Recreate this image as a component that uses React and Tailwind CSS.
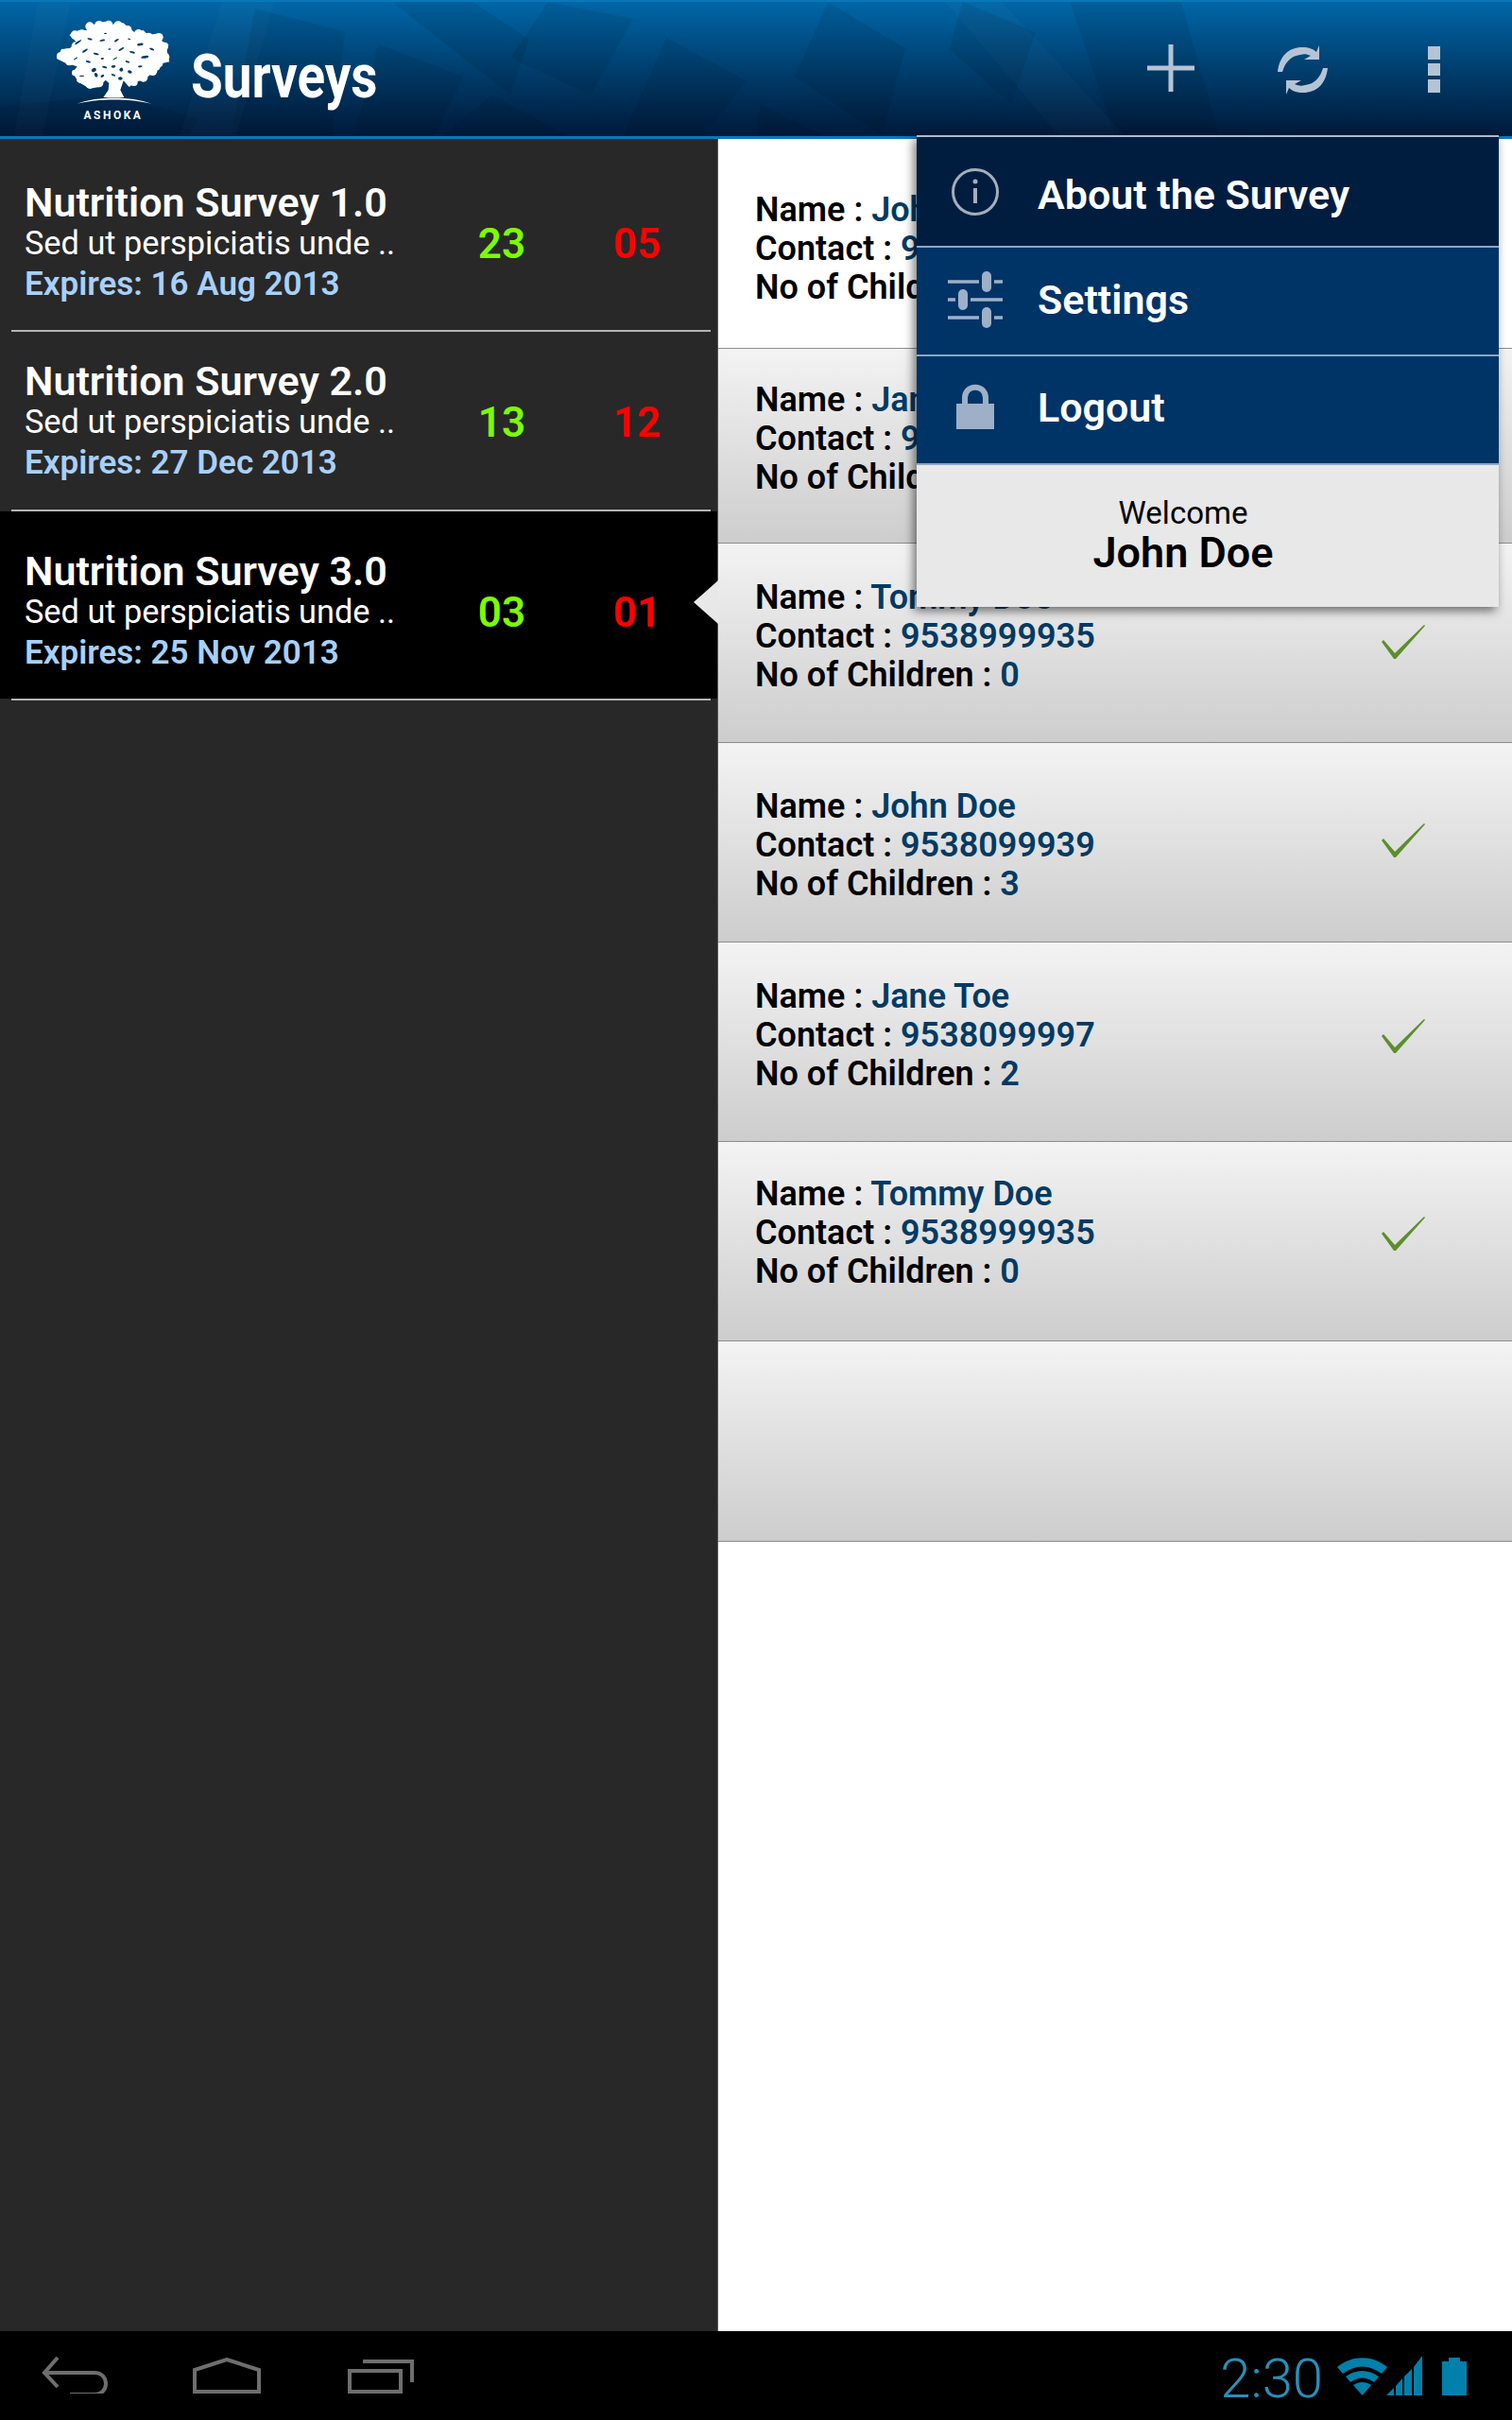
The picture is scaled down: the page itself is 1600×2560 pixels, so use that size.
import React from 'react';

const surveys = [
  { title: 'Nutrition Survey 1.0', expires: 'Expires: 16 Aug 2013', done: '23', left: '05', box: 'h-[202px] pt-[46px]' },
  { title: 'Nutrition Survey 2.0', expires: 'Expires: 27 Dec 2013', done: '13', left: '12', box: 'h-[188px] pt-[31px]' },
  { title: 'Nutrition Survey 3.0', expires: 'Expires: 25 Nov 2013', done: '03', left: '01', box: 'h-[198px] pt-[42px] bg-black' },
];

const people = [
  { name: 'John Doe', contact: '9538099939', kids: '3', box: 'h-[222px] pt-[55px] bg-white', check: 'mt-[29px]' },
  { name: 'Jane Toe', contact: '9538099997', kids: '2', box: 'h-[206px] pt-[34px] bg-gradient-to-b from-[#f3f3f3] to-[#cdcdcd]', check: 'mt-[40px]' },
  { name: 'Tommy Doe', contact: '9538999935', kids: '0', box: 'h-[211px] pt-[37px] bg-gradient-to-b from-[#f3f3f3] to-[#cdcdcd]', check: 'mt-[49px]' },
  { name: 'John Doe', contact: '9538099939', kids: '3', box: 'h-[211px] pt-[47px] bg-gradient-to-b from-[#f3f3f3] to-[#cdcdcd]', check: 'mt-[38px]' },
  { name: 'Jane Toe', contact: '9538099997', kids: '2', box: 'h-[211px] pt-[37px] bg-gradient-to-b from-[#f3f3f3] to-[#cdcdcd]', check: 'mt-[44px]' },
  { name: 'Tommy Doe', contact: '9538999935', kids: '0', box: 'h-[211px] pt-[35px] bg-gradient-to-b from-[#f3f3f3] to-[#cdcdcd]', check: 'mt-[44px]' },
];

const Tree = () => {
  const lumps = [[165,78,14],[195,74,14],[225,72,13],[255,76,15],[285,88,13],[320,100,13],[352,112,14],[385,112,13],[402,140,12],[405,175,13],[385,195,12],[365,220,14],[335,240,14],[305,255,12],[195,258,13],[165,262,13],[135,245,12],[118,225,10],[100,190,12],[72,172,12],[95,160,12],[120,140,13],[118,105,14],[140,100,12]];
  const holes = [[128,128,12,3],[165,118,8,3],[205,122,9,3],[250,122,8,3],[290,118,5,2],[325,135,10,4],[150,155,10,3],[185,165,9,3],[228,150,5,2],[265,150,10,3],[300,160,9,3],[340,175,12,4],[120,180,7,2],[160,190,8,3],[205,180,5,3],[245,180,8,2],[285,190,7,3],[325,205,7,3],[178,216,8,6],[212,207,8,3],[240,205,7,4],[265,215,6,6],[292,222,7,5],[140,235,8,2],[205,235,6,4],[240,232,7,3],[262,243,7,5],[185,232,5,7],[362,150,8,3],[215,100,5,2]];
  return (
    <svg className="w-[160px] h-[140px] shrink-0" viewBox="0 0 480 420">
      <path fill="#fff" d="M165 75 190 68 215 62 240 72 270 66 290 82 305 95 335 90 350 105 385 100 395 125 415 135 410 155 418 190 395 195 385 215 365 225 340 245 310 255 290 270 272 250 262 280 274 303 208 303 224 280 226 258 215 248 195 270 165 275 130 255 110 225 125 205 90 195 60 180 75 150 100 148 125 130 100 105 130 90 170 90Z" />
      {lumps.map(([x, y, r], i) => <circle key={i} cx={x} cy={y} r={r} fill="#fff" />)}
      {holes.map(([x, y, rx, ry], i) => (
        <ellipse key={i} cx={x} cy={y} rx={rx} ry={ry} fill="#03386f" transform={`rotate(${(i * 47) % 70 - 35} ${x} ${y})`} />
      ))}
      <path fill="#fff" d="M125 323C190 298 295 298 360 323 295 306 190 306 125 323Z" />
    </svg>
  );
};

const HeaderPattern = () => (
  <svg className="absolute inset-0 w-full h-full" viewBox="0 0 1600 144" preserveAspectRatio="none">
    <g fill="#000" fillOpacity="0.08">
      <polygon points="270,7 365,32 352,143 245,143" />
      <polygon points="400,45 490,80 460,143 375,143" />
      <polygon points="415,0 500,0 560,40 540,100" />
      <polygon points="580,0 670,18 625,100 540,60" />
      <polygon points="705,38 790,85 745,143 660,143" />
      <polygon points="876,0 958,50 933,143 841,80" />
      <polygon points="1019,0 1096,33 1070,110 1004,50" />
      <polygon points="1132,0 1250,0 1290,143 1180,143" />
      <polygon points="0,112 120,100 210,125 200,143 0,143" />
      <polygon points="520,100 600,143 470,143" />
      <polygon points="805,110 870,143 800,143" />
    </g>
    <g fill="#fff" fillOpacity="0.02">
      <polygon points="40,0 75,0 45,143 15,143" />
      <polygon points="235,0 290,0 250,143 190,143" />
      <polygon points="1000,0 1060,0 1190,143 1120,143" />
    </g>
  </svg>
);

const Sliders = () => (
  <svg className="w-[58px] h-[60px] shrink-0" viewBox="0 0 58 60" fill="none" stroke="#9db0c8">
    <path strokeWidth="3.5" d="M0 11H33M49 11H58M0 30H8M24 30H58M0 49H33M49 49H58" />
    <rect x="36" y="0" width="10" height="22" rx="5" fill="#9db0c8" stroke="none" />
    <rect x="11" y="19" width="10" height="22" rx="5" fill="#9db0c8" stroke="none" />
    <rect x="36" y="38" width="10" height="22" rx="5" fill="#9db0c8" stroke="none" />
  </svg>
);

const Check = () => (
  <svg className="w-[46px] h-[36px]" viewBox="0 0 46 36">
    <path fill="#5b8f2a" d="M0 18 2 16 14 30 45 0 46 1 15 36 13 36Z" />
  </svg>
);

export default function App() {
  return (
    <div className="relative w-[1600px] h-[2560px] flex flex-col overflow-hidden bg-white font-[Roboto,sans-serif]">
      <header className="relative h-[147px] shrink-0 flex items-start border-t-[2px] border-b-[3px] border-t-[#0878b8] border-b-[#0a78bd] bg-gradient-to-b from-[#0067a8] to-[#001a3a]">
        <HeaderPattern />
        <div className="relative pl-[40px] flex">
          <Tree />
          <span className="absolute left-[80px] top-[114px] w-[80px] text-center text-[12px] leading-[12px] font-bold tracking-[2.5px] text-white">ASHOKA</span>
          <h1 className="ml-[2px] mt-[42px] text-[64px] leading-[76px] font-bold text-white origin-left scale-x-[0.857]">Surveys</h1>
        </div>
        <div className="relative ml-auto flex items-start">
          <svg className="mt-[45px] w-[50px] h-[50px]" viewBox="0 0 50 50">
            <path stroke="#b5c4d5" strokeWidth="5" d="M25 0V50M0 25H50" />
          </svg>
          <svg className="ml-[88px] mt-[45px] w-[54px] h-[54px]" viewBox="0 0 54 54" fill="#b5c4d5">
            <path d="M0 29C2 12 12 3 26 3 33 3 38 5 41 8L44 1V16H28L35 12C30 10 28 10 24 11 14 12 8 19 5 29Z" />
            <path d="M53 25C51 42 41 51 27 51 20 51 15 49 12 46L9 53V38H25L18 42C23 44 25 44 29 43 39 42 45 35 48 25Z" />
          </svg>
          <div className="ml-[105px] mr-[76px] mt-[47px] flex flex-col gap-[4px]">
            <div className="w-[13px] h-[14px] bg-[#b5c4d5]" />
            <div className="w-[13px] h-[13px] bg-[#b5c4d5]" />
            <div className="w-[13px] h-[14px] bg-[#b5c4d5]" />
          </div>
        </div>
      </header>

      <main className="flex-1 flex min-h-0">
        <aside className="w-[760px] shrink-0 bg-[#282828] border-r border-[#555]">
          {surveys.map((s) => (
            <div key={s.title}>
              <div className={`flex items-start pl-[26px] ${s.box}`}>
                <div className="w-[455px]">
                  <div className="text-[43px] leading-[43px] font-semibold text-white">{s.title}</div>
                  <div className="text-[34.300px] leading-[43px] text-white">Sed ut perspiciatis unde ..</div>
                  <div className="text-[35px] leading-[44px] font-semibold text-[#a8d0fb]">{s.expires}</div>
                </div>
                <div className="w-[100px] text-center text-[44px] leading-[130px] font-semibold text-[#7cfc00]">{s.done}</div>
                <div className="ml-[43px] w-[100px] text-center text-[44px] leading-[130px] font-semibold text-[#ff0000]">{s.left}</div>
              </div>
              <div className="ml-[12px] w-[740px] h-[2px] bg-[#b4b4b4]" />
            </div>
          ))}
        </aside>

        <section className="flex-1 min-w-0">
          {people.map((p, i) => (
            <div key={i} className={`flex items-start justify-between pl-[39px] pr-[92px] border-b border-[#8c8c8c] ${p.box}`}>
              <div className="text-[36px] leading-[41px] font-semibold text-black">
                <div>Name : <span className="text-[#003a63]">{p.name}</span></div>
                <div>Contact : <span className="text-[#003a63]">{p.contact}</span></div>
                <div>No of Children : <span className="text-[#003a63]">{p.kids}</span></div>
              </div>
              <div className={p.check}><Check /></div>
            </div>
          ))}
          <div className="h-[212px] border-b border-[#8c8c8c] bg-gradient-to-b from-[#f3f3f3] to-[#cdcdcd]" />
        </section>
      </main>

      <nav className="h-[94px] shrink-0 bg-black flex items-start">
        <svg className="ml-[44px] mt-[26px] w-[70px] h-[40px]" viewBox="0 0 70 40" fill="none" stroke="#6e6e6e" strokeWidth="4">
          <path d="M17 2 3 18 17 33M3 18H56C72 18 72 41 56 41H30" />
        </svg>
        <svg className="ml-[90px] mt-[28px] w-[72px] h-[38px]" viewBox="0 0 72 38" fill="none" stroke="#6e6e6e" strokeWidth="4">
          <path d="M2 36V13L36 2 70 13V36Z" />
        </svg>
        <svg className="ml-[92px] mt-[30px] w-[70px] h-[36px]" viewBox="0 0 70 36" fill="none" stroke="#6e6e6e" strokeWidth="4">
          <path d="M16 2H68V24M2 12H56V34H2Z" />
        </svg>
        <span className="ml-auto mt-[15px] text-[58px] leading-[70px] font-light text-[#2a8fb8]">2:30</span>
        <svg className="ml-[15px] mt-[28px] w-[53px] h-[40px]" viewBox="0 0 53 40">
          <path fill="#0080aa" d="M0 10C16-3 37-3 53 10L47 17C34 7 19 7 6 17Z" />
          <path fill="#0080aa" d="M9 20C20 12 33 12 44 20L39 26C30 20 23 20 14 26Z" />
          <path fill="#0080aa" d="M17 29C23 25 30 25 36 29L26.500 40Z" />
        </svg>
        <svg className="-ml-[1px] mt-[26px] w-[39px] h-[42px]" viewBox="0 0 39 42" fill="#0080aa">
          <path d="M0 42 8 34V42ZM10 42V32L17 24V42ZM19 42V22L27 14V42ZM29 42V12L38 0V42Z" />
        </svg>
        <svg className="ml-[20px] mr-[48px] mt-[28px] w-[26px] h-[40px]" viewBox="0 0 26 40" fill="#0080aa">
          <path d="M7 0H19V4H26V40H0V4H7Z" />
        </svg>
      </nav>

      {/* selected survey pointer */}
      <div className="absolute left-[734px] top-[614px] w-[26px] h-[46px] bg-[#e8e8e8] [clip-path:polygon(100%_0,0_50%,100%_100%)]" />

      {/* overflow menu */}
      <div className="absolute left-[970px] top-[143px] w-[616px] shadow-[-3px_4px_10px_rgba(0,0,0,0.55)]">
        <div className="h-[119px] flex items-center border-t-[2px] border-b-[2px] border-t-[#a9bccd] border-b-[#8aa7c5] bg-[#001d3f]">
          <div className="w-[123px] flex justify-center">
            <svg className="w-[50px] h-[50px]" viewBox="0 0 50 50" fill="none" stroke="#a5aebb">
              <circle cx="25" cy="25" r="23.500" strokeWidth="3" />
              <path strokeWidth="4" d="M25 21V37" />
              <circle cx="25" cy="14" r="2.500" fill="#a5aebb" stroke="none" />
            </svg>
          </div>
          <span className="ml-[5px] pt-[6px] text-[43px] leading-[50px] font-semibold text-white">About the Survey</span>
        </div>
        <div className="h-[115px] flex items-center border-b-[2px] border-[#8aa7c5] bg-[#003366]">
          <div className="w-[123px] pb-[4px] flex justify-center"><Sliders /></div>
          <span className="ml-[5px] pb-[3px] text-[43px] leading-[50px] font-semibold text-white">Settings</span>
        </div>
        <div className="h-[115px] flex items-center border-b-[2px] border-[#8aa7c5] bg-[#003366]">
          <div className="w-[123px] pb-[8px] flex justify-center">
            <svg className="w-[40px] h-[48px]" viewBox="0 0 40 48">
              <path fill="none" stroke="#9db0c8" strokeWidth="6" d="M9 24V15C9 0 31 0 31 15V24" />
              <rect x="0" y="21" width="40" height="27" fill="#9db0c8" />
            </svg>
          </div>
          <span className="ml-[5px] pb-[5px] text-[43px] leading-[50px] font-semibold text-white">Logout</span>
        </div>
        <div className="h-[150px] flex flex-col items-center pt-[30px] pr-[52px] bg-[#e8e8e8] text-black">
          <span className="text-[33px] leading-[42px]">Welcome</span>
          <span className="text-[45px] leading-[42px] font-semibold">John Doe</span>
        </div>
      </div>
    </div>
  );
}
